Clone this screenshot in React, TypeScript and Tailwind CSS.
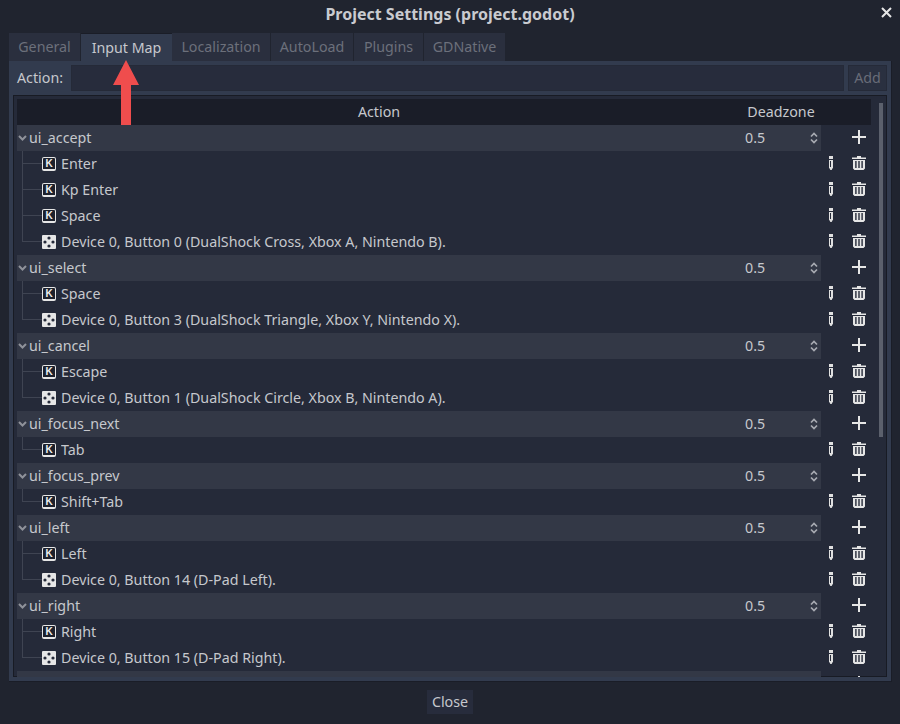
const tabs = [
  { label: "General", w: "w-[72px]" },
  { label: "Input Map", w: "w-[91px]", active: true },
  { label: "Localization", w: "w-[99px]" },
  { label: "AutoLoad", w: "w-[83px]" },
  { label: "Plugins", w: "w-[70px]" },
  { label: "GDNative", w: "w-[82px]" },
];

type Binding = { kind: "key" | "pad"; label: string };

const actions: { name: string; items: Binding[] }[] = [
  {
    name: "ui_accept",
    items: [
      { kind: "key", label: "Enter" },
      { kind: "key", label: "Kp Enter" },
      { kind: "key", label: "Space" },
      { kind: "pad", label: "Device 0, Button 0 (DualShock Cross, Xbox A, Nintendo B)." },
    ],
  },
  {
    name: "ui_select",
    items: [
      { kind: "key", label: "Space" },
      { kind: "pad", label: "Device 0, Button 3 (DualShock Triangle, Xbox Y, Nintendo X)." },
    ],
  },
  {
    name: "ui_cancel",
    items: [
      { kind: "key", label: "Escape" },
      { kind: "pad", label: "Device 0, Button 1 (DualShock Circle, Xbox B, Nintendo A)." },
    ],
  },
  { name: "ui_focus_next", items: [{ kind: "key", label: "Tab" }] },
  { name: "ui_focus_prev", items: [{ kind: "key", label: "Shift+Tab" }] },
  {
    name: "ui_left",
    items: [
      { kind: "key", label: "Left" },
      { kind: "pad", label: "Device 0, Button 14 (D-Pad Left)." },
    ],
  },
  {
    name: "ui_right",
    items: [
      { kind: "key", label: "Right" },
      { kind: "pad", label: "Device 0, Button 15 (D-Pad Right)." },
    ],
  },
];

function KeyIcon() {
  return (
    <div className="flex h-[14px] w-[14px] shrink-0 items-center justify-center rounded-[2px] border border-b-2 border-[#e6e6e6] bg-[#1d212c] font-['Liberation_Sans',sans-serif] text-[10px] leading-none font-bold text-[#f0f0f0]">
      K
    </div>
  );
}

function PadIcon() {
  return (
    <svg width="14" height="14" viewBox="0 0 14 14" className="shrink-0">
      <rect width="14" height="14" rx="1" fill="#e6e6e6" />
      <circle cx="7" cy="3" r="1.6" fill="#252a39" />
      <circle cx="3" cy="7" r="1.6" fill="#252a39" />
      <circle cx="11" cy="7" r="1.6" fill="#252a39" />
      <circle cx="7" cy="11" r="1.6" fill="#252a39" />
    </svg>
  );
}

function Pencil() {
  return (
    <svg width="4" height="14" viewBox="0 0 4 14" className="mb-[2px] shrink-0">
      <rect x="0" y="0" width="4" height="3" fill="#e0e0e0" />
      <path d="M0 4h4v7.5L2.6 14H1.4L0 11.5z" fill="#e0e0e0" />
      <rect x="1" y="5" width="1" height="6" fill="#252a39" />
    </svg>
  );
}

function Trash() {
  return (
    <svg width="14" height="14" viewBox="0 0 14 14" className="mb-[2px] block shrink-0">
      <path d="M0 1.5h5V0h4v1.5h5V3H0z" fill="#e6e6e6" />
      <path d="M1 4h12v8.5L11.5 14h-9L1 12.5zM3.2 5v7h1.4V5zM6.3 5v7h1.4V5zM9.4 5v7h1.4V5z" fill="#e6e6e6" fillRule="evenodd" />
    </svg>
  );
}

function Plus() {
  return (
    <svg width="14" height="14" viewBox="0 0 14 14" className="shrink-0">
      <path d="M6 0h2v6h6v2H8v6H6V8H0V6h6z" fill="#e6e6e6" />
    </svg>
  );
}

function ActionGroup({ name, items }: { name: string; items: Binding[] }) {
  return (
    <div>
      <div className="flex h-[26px]">
        <div className="flex w-[804px] items-center bg-[#333846]">
          <svg width="12" height="12" viewBox="0 0 12 12" className="shrink-0">
            <path d="M2 4l3.5 3.5L9 4" fill="none" stroke="#8f929a" strokeWidth="2" />
          </svg>
          <span className="w-[716px] truncate">{name}</span>
          <span className="w-[65px]">0.5</span>
          <svg width="8" height="12" viewBox="0 0 8 12" className="shrink-0">
            <path d="M1 4.5L4 1.5 7 4.5M1 7.5L4 10.5 7 7.5" fill="none" stroke="#a8abb2" strokeWidth="1.7" />
          </svg>
        </div>
        <div className="flex flex-1 items-start pt-[5px] pl-[31px]">
          <Plus />
        </div>
      </div>
      {items.map((b, i) => (
        <div key={i} className="flex h-[26px] items-center">
          <div className="ml-[5px] w-[20px] shrink-0 self-start">
            <div className="h-[13px] border-b border-l border-[#3f4452]" />
            {i < items.length - 1 && <div className="h-[13px] border-l border-[#3f4452]" />}
          </div>
          {b.kind === "key" ? <KeyIcon /> : <PadIcon />}
          <span className="ml-[5px] w-[768px] truncate">{b.label}</span>
          <Pencil />
          <div className="ml-[19px]">
            <Trash />
          </div>
        </div>
      ))}
    </div>
  );
}

export default function App() {
  return (
    <div className="relative flex h-[724px] w-[900px] flex-col overflow-hidden bg-[#20242f] font-['Noto_Sans',sans-serif] text-[14.25px] leading-[20px] text-[#c6c8cd]">
      <div className="flex h-[33px] shrink-0 items-center justify-center pb-[5px]">
        <span className="text-[16px] font-bold text-[#c9cbd0]">Project Settings (project.godot)</span>
        <svg width="11" height="11" viewBox="0 0 11 11" className="absolute top-[7px] left-[881px]">
          <path d="M1 1l9 9M10 1l-9 9" stroke="#e6e6e6" strokeWidth="2" />
        </svg>
      </div>

      <div className="flex h-[28px] shrink-0 pl-[9px]">
        {tabs.map((t) => (
          <div
            key={t.label}
            className={
              t.active
                ? "flex h-[28px] w-[91px] items-center justify-center border-t border-[#1a1d27] bg-[#323b4e] text-[#c6c8cd]"
                : `flex h-[28px] ${t.w} items-center justify-center border-r border-[#20242f] bg-[#2a2f3e] text-[#6c707b]`
            }
          >
            {t.label}
          </div>
        ))}
      </div>

      <div className="ml-[9px] flex h-[621px] w-[883px] shrink-0 flex-col border-r border-b border-[#1a1d27] bg-[#323b4e] px-[4px] pt-[4px]">
        <div className="flex h-[26px] shrink-0">
          <span className="ml-[4px] w-[54px] leading-[26px]">Action:</span>
          <div className="h-[26px] w-[773px] border border-[#252a38] bg-[#272c3c]" />
          <div className="ml-[4px] flex h-[26px] w-[39px] items-center justify-center border border-[#252a38] bg-[#2a3040] text-[#686c78]">
            Add
          </div>
        </div>

        <div className="relative mt-[4px] flex h-[582px] w-[874px] shrink-0 items-start overflow-hidden bg-[#252a39] pt-[4px] pl-[4px] shadow-[inset_0_0_0_1px_#181b24]">
          <div className="w-[854px] shrink-0">
            <div className="flex h-[26px] items-center bg-[#1a1d28] text-center">
              <span className="w-[724px]">Action</span>
              <span className="w-[80px]">Deadzone</span>
            </div>
            {actions.map((a) => (
              <ActionGroup key={a.name} name={a.name} items={a.items} />
            ))}
            {/* next group, only its top sliver is in view */}
            <div className="flex h-[26px]">
              <div className="w-[804px] bg-[#333846]" />
              <div className="flex flex-1 items-start pt-[5px] pl-[31px]">
                <Plus />
              </div>
            </div>
          </div>
          <div className="mt-[4px] ml-[8px] h-[334px] w-[4px] shrink-0 bg-[#5b606c]" />
        </div>
      </div>

      <div className="mt-[8px] flex justify-center">
        <div className="flex h-[24px] w-[46px] items-center justify-center bg-[#272c3c]">Close</div>
      </div>

      {/* red annotation arrow */}
      <svg width="28" height="67" viewBox="0 0 28 67" className="absolute top-[59px] left-[112px]">
        <path d="M14 1L27 26H19V66H9V26H1z" fill="#ef4d4d" />
      </svg>
    </div>
  );
}
